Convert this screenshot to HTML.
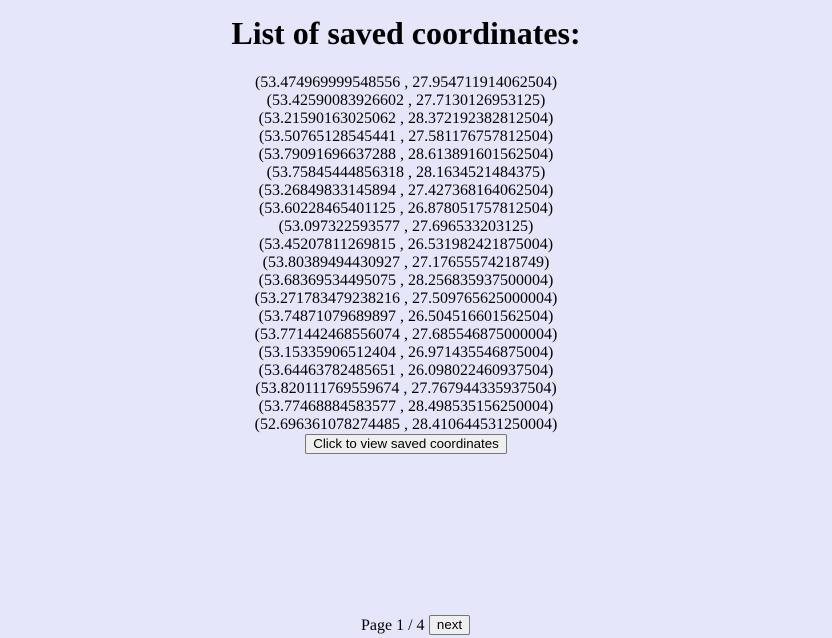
<!DOCTYPE html>
<html><head><meta charset="utf-8"><style>
html,body{margin:0;padding:0;background:#e6e6fa;width:832px;height:638px;overflow:hidden}
body{font-family:"Liberation Serif",serif;color:#000;position:relative}
.wrap{position:absolute;left:0;top:0;width:812px;text-align:center}
h1{font-size:32px;font-weight:bold;margin:0;position:absolute;top:15px;left:0;width:812px;line-height:37px}
.list{position:absolute;top:74px;left:0;width:812px;font-size:16px;line-height:18px}
button{font-family:"Liberation Sans",sans-serif;font-size:13.3px;background:#efefef;border:1px solid #767676;border-radius:2px;padding:1px 6px;color:#000;height:20px;line-height:16px}
.b1{position:absolute;top:434px;left:305px;width:202px}
.foot{position:absolute;top:615px;left:0;width:832px;font-size:16px}
.foot span{position:absolute;left:361px;top:2px}
.b2{position:absolute;left:429px;top:0;width:41px;padding:0}
</style></head><body>
<div class="wrap">
<h1>List of saved coordinates:</h1>
<div class="list">
(53.474969999548556 , 27.954711914062504)<br>
(53.42590083926602 , 27.7130126953125)<br>
(53.21590163025062 , 28.372192382812504)<br>
(53.50765128545441 , 27.581176757812504)<br>
(53.79091696637288 , 28.613891601562504)<br>
(53.75845444856318 , 28.1634521484375)<br>
(53.26849833145894 , 27.427368164062504)<br>
(53.60228465401125 , 26.878051757812504)<br>
(53.097322593577 , 27.696533203125)<br>
(53.45207811269815 , 26.531982421875004)<br>
(53.80389494430927 , 27.17655574218749)<br>
(53.68369534495075 , 28.256835937500004)<br>
(53.271783479238216 , 27.509765625000004)<br>
(53.74871079689897 , 26.504516601562504)<br>
(53.771442468556074 , 27.685546875000004)<br>
(53.15335906512404 , 26.971435546875004)<br>
(53.64463782485651 , 26.098022460937504)<br>
(53.820111769559674 , 27.767944335937504)<br>
(53.77468884583577 , 28.498535156250004)<br>
(52.696361078274485 , 28.410644531250004)
</div>
</div>
<button class="b1">Click to view saved coordinates</button>
<div class="foot"><span>Page 1 / 4</span><button class="b2">next</button></div>
</body></html>
